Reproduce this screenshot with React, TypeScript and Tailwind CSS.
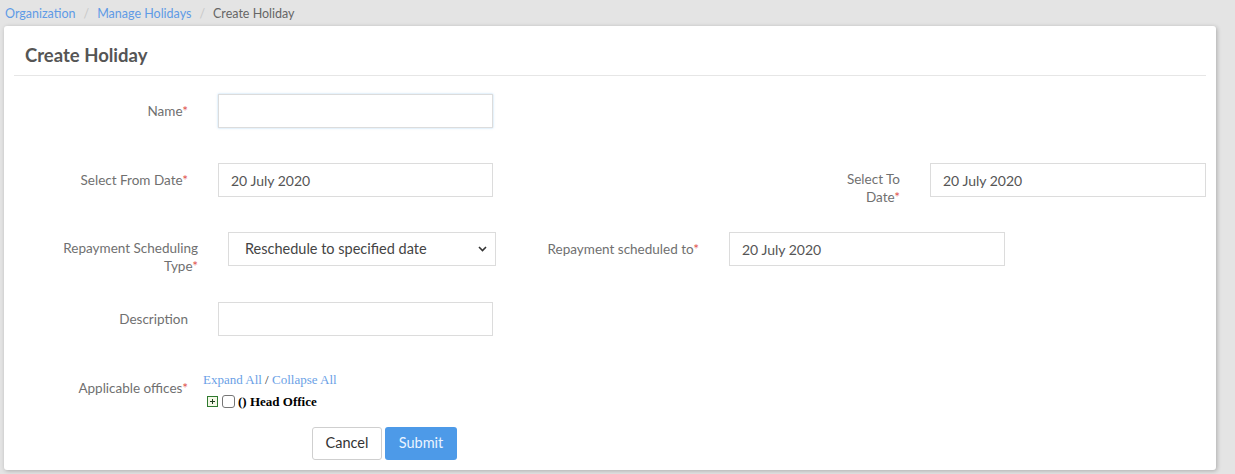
import React from 'react';

const Req = () => <span className="text-[#e0504a]">*</span>;

function Field({ value, className = '' }: { value?: string; className?: string }) {
  return (
    <div
      className={`h-[34px] shrink-0 border border-[#dcdcdc] bg-white px-[12px] flex items-center text-[14px] text-[#555] ${className}`}
    >
      {value}
    </div>
  );
}

export default function App() {
  return (
    <div className="min-h-screen bg-[#e4e4e4] font-['Lato',sans-serif]">
      {/* breadcrumb */}
      <nav className="h-[26px] px-[5px] pt-[2px] flex items-center text-[12.5px]">
        <a className="text-[#5f9be6]">Organization</a>
        <span className="px-[8px] text-[#c8c8c8]">/</span>
        <a className="text-[#5f9be6]">Manage Holidays</a>
        <span className="px-[8px] text-[#c8c8c8]">/</span>
        <span className="text-[#666]">Create Holiday</span>
      </nav>

      <div className="ml-[4px] w-[1212px] h-[444px] bg-white rounded-[3px] shadow-[1px_1px_4px_rgba(0,0,0,0.25)] px-[10px]">
        <div className="h-[50px] border-b border-[#e6e6e6] flex items-center pl-[11px] pt-[10px]">
          <h2 className="text-[18.5px] font-bold text-[#555]">Create Holiday</h2>
        </div>

        <div className="pt-[18px] text-[13.5px] text-[#707070]">
          {/* Name */}
          <div className="flex items-start h-[34px]">
            <label className="w-[174px] shrink-0 text-right pt-[8px] leading-[18px]">
              Name<Req />
            </label>
            <Field className="ml-[30px] w-[275px] border-[#b8d7f7] shadow-[0_0_2px_rgba(102,175,233,0.5)]" />
          </div>

          {/* Dates */}
          <div className="flex items-start h-[34px] mt-[35px]">
            <label className="w-[174px] shrink-0 text-right pt-[8px] leading-[18px]">
              Select From Date<Req />
            </label>
            <Field value="20 July 2020" className="ml-[30px] w-[275px]" />
            <label className="ml-[337px] w-[70px] shrink-0 text-right pt-[7px] leading-[18px]">
              Select To Date<Req />
            </label>
            <Field value="20 July 2020" className="ml-[30px] w-[276px]" />
          </div>

          {/* Repayment */}
          <div className="flex items-start h-[34px] mt-[35px]">
            <label className="w-[184px] shrink-0 text-right pt-[7px] leading-[18px]">
              Repayment Scheduling
              <br />
              Type<Req />
            </label>
            <div className="ml-[30px] w-[268px] shrink-0 h-[34px] border border-[#dcdcdc] flex items-center justify-between pl-[16px] pr-[8px] text-[14.5px] text-[#444]">
              <span>Reschedule to specified date</span>
              <svg width="9" height="6" viewBox="0 0 9 6">
                <path d="M1 1l3.5 3.5L8 1" fill="none" stroke="#333" strokeWidth="1.6" />
              </svg>
            </div>
            <label className="ml-[33px] w-[170px] shrink-0 text-right pt-[8px] leading-[18px] whitespace-nowrap">
              Repayment scheduled to<Req />
            </label>
            <Field value="20 July 2020" className="ml-[30px] w-[276px]" />
          </div>

          {/* Description */}
          <div className="flex items-start h-[34px] mt-[36px]">
            <label className="w-[174px] shrink-0 text-right pt-[8px] leading-[18px]">Description</label>
            <Field className="ml-[30px] w-[275px]" />
          </div>

          {/* Offices */}
          <div className="flex items-start mt-[36px]">
            <label className="w-[174px] shrink-0 text-right pt-[7px] leading-[18px]">
              Applicable offices<Req />
            </label>
            <div className="ml-[15px] font-['Liberation_Serif',serif] text-[13px]">
              <div className="leading-[16px]">
                <a className="text-[#6a9fe6]">Expand All</a>
                <span className="text-[#333]"> / </span>
                <a className="text-[#6a9fe6]">Collapse All</a>
              </div>
              <div className="flex items-center mt-[4px] pl-[4px]">
                <svg width="11" height="11" viewBox="0 0 11 11">
                  <rect x="0.5" y="0.5" width="10" height="10" fill="#f4f8e8" stroke="#2f7a2f" />
                  <path d="M3 5.5h5M5.5 3v5" stroke="#1f3f1f" strokeWidth="1" />
                </svg>
                <span className="ml-[4px] w-[13px] h-[13px] border border-[#767676] rounded-[3px] bg-white" />
                <span className="ml-[3px] font-bold text-black">() Head Office</span>
              </div>
            </div>
          </div>

          {/* Buttons */}
          <div className="flex mt-[15px] ml-[298px] gap-[3px]">
            <button className="w-[70px] h-[33px] border border-[#cfcfcf] rounded-[3px] bg-white text-[14.5px] text-[#333]">
              Cancel
            </button>
            <button className="w-[72px] h-[33px] rounded-[3px] bg-[#4d9ae8] text-[14.5px] text-[#eaf3ff]">
              Submit
            </button>
          </div>
        </div>
      </div>
    </div>
  );
}
